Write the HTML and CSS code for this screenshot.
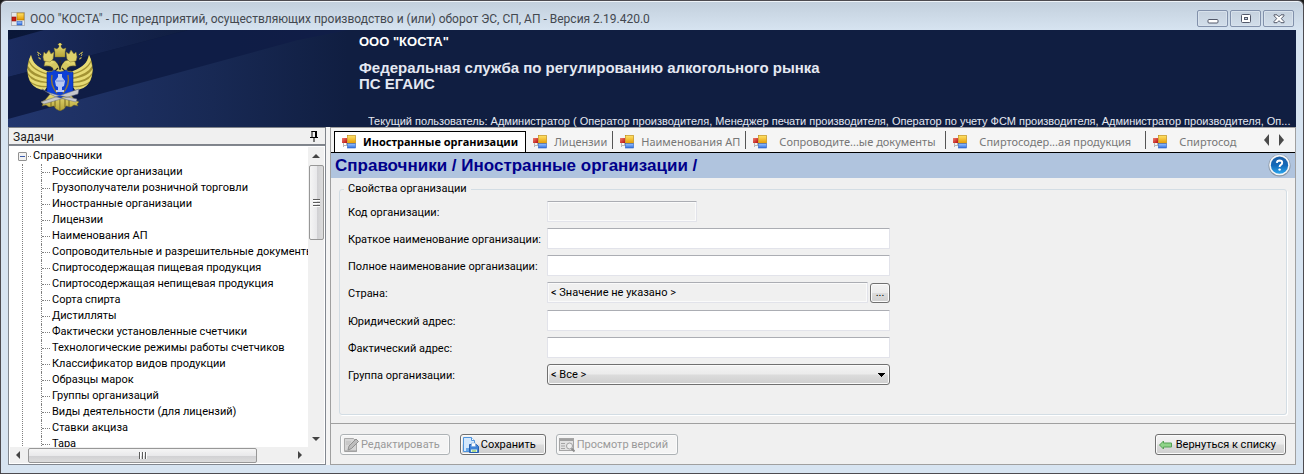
FILE: index.html
```html
<!DOCTYPE html>
<html lang="ru">
<head>
<meta charset="utf-8">
<title>ООО "КОСТА" - ПС предприятий</title>
<link rel="stylesheet" href="styles.css">
</head>
<body>
<svg class="defs" aria-hidden="true">
  <defs>
    <linearGradient id="gy" x1="0" y1="0" x2="0" y2="1"><stop offset="0" stop-color="#ffe36a"/><stop offset="1" stop-color="#e59a00"/></linearGradient>
    <linearGradient id="gb" x1="0" y1="0" x2="0" y2="1"><stop offset="0" stop-color="#9cc4ff"/><stop offset="1" stop-color="#2f6fe0"/></linearGradient>
    <linearGradient id="gr" x1="0" y1="0" x2="1" y2="1"><stop offset="0" stop-color="#f08070"/><stop offset="1" stop-color="#b80d0d"/></linearGradient>
    <symbol id="form" viewBox="0 0 14 14">
      <path d="M1.500 8v4M4.500 8v3M1 10.500h5" stroke="#b8b8b8" fill="none"/>
      <rect x="0" y="3" width="5" height="5" fill="url(#gr)"/>
      <rect x="5.500" y=".5" width="8" height="8" fill="url(#gy)" stroke="#b98200" stroke-width=".6"/>
      <rect x="5.500" y="8.500" width="8" height="4.500" fill="url(#gb)" stroke="#2e5fc0" stroke-width=".6"/>
    </symbol>
  </defs>
</svg>
<div class="window">
  <header class="titlebar">
    <svg class="app-icon" viewBox="0 0 14 14"><rect x=".5" y=".5" width="13" height="13" fill="#e6e8ea" stroke="#b0b4b8"/><rect x="1" y="5" width="4" height="4" fill="#c81e14" stroke="#8e0d0d" stroke-width=".6"/><rect x="6" y="1" width="7" height="7" fill="url(#gy)" stroke="#a87400" stroke-width=".6"/><rect x="6" y="9.500" width="5" height="3.500" fill="url(#gb)" stroke="#2e5fc0" stroke-width=".6"/></svg>
    <h1 class="window-title">ООО "КОСТА" - ПС предприятий, осуществляющих производство и (или) оборот ЭС, СП, АП - Версия 2.19.420.0</h1>
    <div class="window-buttons">
      <button class="win-btn" aria-label="Свернуть"><svg viewBox="0 0 12 10"><rect x="1" y="5.500" width="10" height="3.500" rx="1" fill="#fff" stroke="#53596a"/></svg></button>
      <button class="win-btn" aria-label="Развернуть"><svg viewBox="0 0 12 10"><rect x="1.500" y=".5" width="9" height="8" rx="1" fill="#fff" stroke="#53596a"/><rect x="4.500" y="3.500" width="3" height="2" fill="#c5d1de" stroke="#53596a"/></svg></button>
      <button class="win-btn" aria-label="Закрыть"><svg viewBox="0 0 12 10"><path d="M1 .8h3l2 2 2-2h3v1L8.200 4.500 11 7.500v1.200H8l-2-2-2 2H1V7.500l2.800-3L1 1.800z" fill="#fff" stroke="#53596a"/></svg></button>
    </div>
  </header>

  <section class="banner">
    <svg class="rays" viewBox="0 0 340 97" preserveAspectRatio="none">
      <defs>
        <linearGradient id="r1" x1="0" x2="1"><stop offset="0" stop-color="#0a1738"/><stop offset="1" stop-color="#101e41"/></linearGradient>
        <linearGradient id="r2" x1="0" x2="1"><stop offset="0" stop-color="#1b2c60"/><stop offset=".5" stop-color="#15244f"/><stop offset="1" stop-color="#101e41"/></linearGradient>
        <linearGradient id="r3" x1="0" x2="1"><stop offset="0" stop-color="#22366e"/><stop offset=".6" stop-color="#182954"/><stop offset="1" stop-color="#101e41"/></linearGradient>
      </defs>
      <rect width="340" height="97" fill="url(#r1)"/>
      <path d="M0 10 36 0H180L0 47z" fill="url(#r2)"/>
      <path d="M0 47 180 0H340V4L0 90z" fill="#101e48" opacity=".8"/>
      <path d="M0 89 290 10 340 0V97H0z" fill="url(#r3)"/>
    </svg>
    <svg class="emblem" viewBox="0 0 66 68" role="img" aria-label="Герб">
      <defs><linearGradient id="gold" x1="0" y1="0" x2="0" y2="1"><stop offset="0" stop-color="#eadf78"/><stop offset="1" stop-color="#b5a338"/></linearGradient>
      <g id="half">
        <path d="M4 12C-1 20-1 35 5 41c4 4 10 5 16 3l2-16c-7 1-13-3-16-8z" fill="#a39333"/>
        <path d="M4 12q1 10 16 16l3 3Q6 27 2 17zM2 19q3 9 20 13v3Q5 31 1 23zM0 25q4 9 21 11v3Q5 37 1 30zM1 32q5 8 19 8v3Q8 43 3 38zM4 40q6 5 16 4l-2 3q-9 0-14-7z" fill="#e6da74"/>
        <path d="M31 36q-7-1-9-8 5 1 4-3-3-3-9-2l1-4q2-3 6-2l4 1q5 5 3 10z" fill="url(#gold)" stroke="#796b22" stroke-width=".5"/>
        <path d="M17 18l-1-4 1-5 2 2 3-4 2 4 3-2-1 7-3 3z" fill="#ddd06a" stroke="#82742a" stroke-width=".5"/>
        <path d="M10 9q3 1 4 3M12 13q-2-1 0-3M14 16q-3 0-2-2" stroke="#c4b654" fill="none"/>
        <path d="M24 50 18 57l-4 2 2 2-1 2 4-1 3 2 5-1 2 3 4 2V50z" fill="url(#gold)" stroke="#6d6020" stroke-width=".5"/>
        <path d="M24 57v6M28 56v8" stroke="#74671f"/>
      </g></defs>
      <use href="#half"/><use href="#half" transform="translate(66 0) scale(-1 1)"/>
      <path d="M28 14V9l-1-4 3 1 2-2V2h-1V1h1V0h2v1h1v1h-1v2l2 2 3-1-1 4v5z" fill="url(#gold)" stroke="#82742a" stroke-width=".4"/>
      <path d="M29 29l-5-7 4-3 3 3 2 5 2-5 3-3 4 3-5 7z" fill="#d5c862"/>
      <path d="M33 17v10M31 25l-3 3M35 25l3 3" stroke="#2d2a20" stroke-width="1.200"/>
      <path d="M20 29q5 1 7-2 6 4 12 0 2 3 7 2v20q-5 2-8 4l-5 2-5-2q-3-2-8-4z" fill="#0d3fd6" stroke="#082a92" stroke-width=".6"/>
      <path d="M25 32q-2 10 5 18M41 32q2 10-5 18" fill="none" stroke="#8d7439" stroke-width="1.500"/>
      <path d="M31 31h4v3l3 4-1 5-2 1v3h2v2h-8v-2h2v-3l-2-1-1-5 3-4z" fill="#b9c9f2"/>
      <path d="M29 38h8" stroke="#6f8be0"/>
      <path d="M14 59 46 48l6-2-1 5-34 10zM15 46l8 5 6 3 20 5 1-3-20-4-10-3z" fill="#c7c8ca" stroke="#666b76" stroke-width=".5"/>
    </svg>
    <div class="banner-text">
      <p class="company">ООО "КОСТА"</p>
      <p class="agency">Федеральная служба по регулированию алкогольного рынка<br>ПС ЕГАИС</p>
      <p class="user">Текущий пользователь: Администратор ( Оператор производителя, Менеджер печати производителя, Оператор по учету ФСМ производителя, Администратор производителя, Оп...</p>
    </div>
  </section>

  <div class="workspace">
    <aside class="tasks">
      <div class="tasks-head"><h2>Задачи</h2>
        <button class="pin" aria-label="Закрепить"><svg viewBox="0 0 8 11"><path d="M1.500 .5h5M2 0v6M5.500 0v6M6.500 0v6M0 6.500h8M4 7v4" stroke="#000" fill="none"/></svg></button>
      </div>
      <div class="tree-box">
        <nav class="tree" aria-label="Задачи">
          <div class="root"><button class="toggle" aria-label="Свернуть"></button><span class="stub"></span><a href="#">Справочники</a></div>
          <ul>
            <li><a href="#">Российские организации</a></li>
            <li><a href="#">Грузополучатели розничной торговли</a></li>
            <li><a href="#">Иностранные организации</a></li>
            <li><a href="#">Лицензии</a></li>
            <li><a href="#">Наименования АП</a></li>
            <li><a href="#">Сопроводительные и разрешительные документы</a></li>
            <li><a href="#">Спиртосодержащая пищевая продукция</a></li>
            <li><a href="#">Спиртосодержащая непищевая продукция</a></li>
            <li><a href="#">Сорта спирта</a></li>
            <li><a href="#">Дистилляты</a></li>
            <li><a href="#">Фактически установленные счетчики</a></li>
            <li><a href="#">Технологические режимы работы счетчиков</a></li>
            <li><a href="#">Классификатор видов продукции</a></li>
            <li><a href="#">Образцы марок</a></li>
            <li><a href="#">Группы организаций</a></li>
            <li><a href="#">Виды деятельности (для лицензий)</a></li>
            <li><a href="#">Ставки акциза</a></li>
            <li><a href="#">Тара</a></li>
          </ul>
        </nav>
        <div class="vbar"><span class="arrow up"></span><span class="thumb"><i></i></span><span class="arrow down"></span></div>
        <div class="hbar"><span class="arrow left"></span><span class="thumb"><i></i></span><span class="arrow right"></span></div>
      </div>
    </aside>

    <main class="content">
      <div class="tabs">
        <div class="tab-strip" role="tablist">
          <button class="tab active" role="tab" aria-selected="true"><svg><use href="#form"/></svg>Иностранные организации</button>
          <button class="tab" role="tab"><svg><use href="#form"/></svg>Лицензии</button>
          <button class="tab" role="tab"><svg><use href="#form"/></svg>Наименования АП</button>
          <button class="tab wide" role="tab"><svg><use href="#form"/></svg>Сопроводите...ые документы</button>
          <button class="tab wide" role="tab"><svg><use href="#form"/></svg>Спиртосодер...ая продукция</button>
          <button class="tab wide" role="tab"><svg><use href="#form"/></svg>Спиртосодер...ая продукция</button>
        </div>
        <div class="tab-nav"><button class="arrow prev" aria-label="Назад"></button><button class="arrow next" aria-label="Вперёд"></button></div>
      </div>
      <div class="crumbs">
        <h2>Справочники / Иностранные организации /</h2>
        <button class="help" aria-label="Справка"><svg viewBox="0 0 24 24"><defs><linearGradient id="hb" x1="0" y1="0" x2="0" y2="1"><stop offset="0" stop-color="#1c5fa6"/><stop offset=".5" stop-color="#1268b8"/><stop offset="1" stop-color="#2ba6ee"/></linearGradient></defs><circle cx="12" cy="12" r="11.500" fill="#8a96a4"/><circle cx="12" cy="11.500" r="10.800" fill="#f4f6f8"/><circle cx="12" cy="11.700" r="9" fill="url(#hb)"/><path d="M9.200 9.300q.2-2.600 2.900-2.600 2.700.1 2.700 2.300 0 1.300-1.500 2.300-1.200.8-1.200 2.300" fill="none" stroke="#fff" stroke-width="2"/><circle cx="12.100" cy="16.300" r="1.300" fill="#fff"/></svg></button>
      </div>
      <form class="form">
        <fieldset>
          <legend>Свойства организации</legend>
          <div class="fields">
            <label for="code">Код организации:</label><input id="code" class="short" type="text" disabled>
            <label for="short">Краткое наименование организации:</label><input id="short" type="text">
            <label for="full">Полное наименование организации:</label><input id="full" type="text">
            <label for="country">Страна:</label><div class="picker"><input id="country" type="text" value="&lt; Значение не указано &gt;" readonly><button type="button" class="more">...</button></div>
            <label for="legal">Юридический адрес:</label><input id="legal" type="text">
            <label for="actual">Фактический адрес:</label><input id="actual" type="text">
            <label for="group">Группа организации:</label><select id="group"><option>&lt; Все &gt;</option></select>
          </div>
        </fieldset>
      </form>
      <footer class="actions">
        <button class="btn" disabled><svg viewBox="0 0 16 16"><path d="M1.500 1.500h9l3 3v10h-12z" fill="#d5d5d5" stroke="#a9a9a9"/><path d="M3 5h5M3 7h4" stroke="#bbb"/><path d="M5 13l1-4 7-7 2.500 2.500-7 7z" fill="#bdbdbd" stroke="#8f8f8f"/><path d="M2 14h12" stroke="#999"/></svg>Редактировать</button>
        <button class="btn"><svg viewBox="0 0 16 16"><path d="M.5 .5h8l3 3v11H.5z" fill="#d4e8fc" stroke="#4f94dc"/><path d="M8.500 .5v3h3" fill="#fff" stroke="#4f94dc"/><path d="M3 11h3v3H3z" fill="#68a8ea"/><path d="M6.500 7.500h7l2 2v6h-9z" fill="#3f83d8" stroke="#265fae"/><path d="M8.500 6h4v3.500h-4z" fill="#fff" stroke="#79a7dc" stroke-width=".6"/><path d="M8 12.500h6V15H8z" fill="#e2f3dc"/><path d="M9 14h4" stroke="#7bbf45"/></svg>Сохранить</button>
        <button class="btn" disabled><svg viewBox="0 0 16 16"><rect x=".5" y="1.500" width="14" height="12" fill="#e2e2e2" stroke="#a5a5a5"/><path d="M1 3h13" stroke="#a0a0a0" stroke-width="2"/><path d="M2 6.500h4M2 9h4M2 11.500h4" stroke="#a5a5a5"/><circle cx="10.500" cy="9" r="3" fill="#eee" stroke="#a0a0a0"/><path d="M12.500 11.500l3 3" stroke="#8e8e8e" stroke-width="2"/></svg>Просмотр версий</button>
        <button class="btn back"><svg viewBox="0 0 16 16"><path d="M1.500 8l4-4v2h8v4h-8v2z" fill="#8fd489" stroke="#55a055"/></svg>Вернуться к списку</button>
      </footer>
    </main>
  </div>
</div>
</body>
</html>
```
FILE: styles.css
```css
* { box-sizing: border-box; }

body {
  margin: 0;
  background: #1b1b1b;
  color: #000;
  font: 11px/16px Roboto, "Liberation Sans", sans-serif;
}

h1, h2, p, ul { margin: 0; padding: 0; font-size: inherit; font-weight: inherit; }
button, input, select { font: inherit; color: inherit; }
button { padding: 0; border: 0; background: none; }
a { color: inherit; text-decoration: none; }
svg { display: block; flex: none; }
.defs { position: absolute; width: 0; height: 0; }

.window {
  display: flex;
  flex-direction: column;
  height: 100vh;
  padding: 0 7px 8px;
  border: 1px solid #4d4b50;
  border-radius: 6px 6px 0 0;
  background: linear-gradient(#c2cfdc, #d7e4f1 30px);
  box-shadow: inset 0 1px 0 #eef3f8;
}

/* Title bar */
.titlebar { display: flex; flex: none; align-items: center; height: 29px; padding: 6px 2px 0 3px; }
.app-icon { width: 14px; height: 14px; }
.window-title { flex: 1; margin-left: 5px; color: #43484f; font-size: 12px; white-space: nowrap; overflow: hidden; }
.window-buttons { display: flex; gap: 2px; }
.win-btn {
  display: grid;
  place-items: center;
  width: 31px;
  height: 17px;
  border: 1px solid #8291ab;
  border-radius: 2px;
  background: linear-gradient(#c5d1de, #d2deea);
  box-shadow: inset 0 0 0 1px #d8e2ec;
}
.win-btn svg { width: 12px; height: 10px; }

/* Banner */
.banner { position: relative; display: flex; flex: none; height: 97px; background: #101e41; }
.rays { position: absolute; left: 0; top: 0; width: 340px; height: 100%; }
.emblem { position: relative; width: 66px; height: 68px; margin: 13px 0 0 19px; }
.banner-text {
  position: relative;
  flex: 1;
  min-width: 0;
  margin-left: 266px;
  padding: 4px 4px 0 0;
  color: #e4e8f2;
  font-family: "Liberation Sans", sans-serif;
}
.company { color: #fff; font-size: 13px; font-weight: bold; }
.agency { margin-top: 10px; font-size: 15px; font-weight: bold; }
.user { margin: 21px 0 0 9px; overflow: hidden; text-overflow: ellipsis; white-space: nowrap; }

/* Panels */
.workspace { display: flex; flex: 1; gap: 4px; min-height: 0; background: #f4f4f4; }

.tasks { display: flex; flex-direction: column; width: 318px; }
.tasks-head {
  display: flex;
  flex: none;
  align-items: center;
  justify-content: space-between;
  height: 18px;
  padding: 1px 7px 0 4px;
  border: 1px solid #7f838a;
  background: #f0f0f0;
  color: #222;
  font-size: 12px;
}
.pin svg { width: 8px; height: 11px; }

.tree-box {
  display: grid;
  flex: 1;
  grid-template: minmax(0, 1fr) 16px / minmax(0, 1fr) 16px;
  min-height: 0;
  padding: 1px;
  border: 1px solid #82878f;
  background: #fff;
}
.tree { overflow: hidden; padding: 1px 0 0 8px; white-space: nowrap; }
.root { display: flex; align-items: center; }
.toggle {
  width: 9px;
  height: 9px;
  border: 1px solid #919191;
  border-radius: 1px;
  background: linear-gradient(#3b5bab, #3b5bab) center / 5px 1px no-repeat, #f2f2f2;
}
.stub { width: 3px; margin: 0 2px 0 1px; border-top: 1px dotted #808080; }
.tree ul { margin-left: 4px; border-left: 1px dotted #808080; padding-left: 18px; list-style: none; }
.tree li { display: flex; align-items: center; border-left: 1px dotted #808080; }
.tree li::before { content: ""; flex: none; width: 8px; margin-right: 2px; border-top: 1px dotted #808080; }

.vbar, .hbar { display: flex; align-items: center; background: #f0f0f0; }
.vbar { flex-direction: column; }
.hbar { grid-column: 1; }
.tree-box::after { content: ""; background: #f0f0f0; }
.vbar .thumb, .hbar .thumb { display: grid; place-items: center; border: 1px solid #979797; border-radius: 2px; }
.vbar .thumb { width: 15px; height: 25%; background: linear-gradient(90deg, #f5f5f5, #e9e9eb 50%, #d0d0d3 52%, #dcdcdc); }
.hbar .thumb { width: 77%; height: 15px; background: linear-gradient(#f5f5f5, #e9e9eb 50%, #d0d0d3 52%, #dcdcdc); }
.vbar i { width: 7px; height: 8px; background: repeating-linear-gradient(#5c5c5c 0 1px, #fff 1px 2px, transparent 2px 3px); }
.hbar i { width: 8px; height: 7px; background: repeating-linear-gradient(90deg, #5c5c5c 0 1px, #fff 1px 2px, transparent 2px 3px); }

.arrow { flex: none; width: 0; height: 0; border: 0 solid transparent; }
.up { margin: 7px 0; border-width: 0 4px 4px; border-bottom-color: #444; }
.down { margin: auto 0 6px; border-width: 4px 4px 0; border-top-color: #444; }
.left { margin: 0 8px 0 6px; border-width: 4px 4px 4px 0; border-right-color: #444; }
.right { margin: 0 6px 0 auto; border-width: 4px 0 4px 4px; border-left-color: #444; }

/* Content */
.content {
  display: flex;
  flex: 1;
  flex-direction: column;
  min-width: 0;
  border: 1px solid #a0a0a0;
  background: #f0f0f0;
}
.tabs { display: flex; flex: none; height: 25px; padding: 3px 11px 0 3px; border-bottom: 1px solid #000; background: #f5f5f5; }
.tab-strip { display: flex; flex: 0 1 903px; min-width: 0; overflow: hidden; }
.tab {
  position: relative;
  display: flex;
  flex: none;
  align-items: center;
  gap: 7px;
  height: 21px;
  padding: 0 6px 0 7px;
  color: #777;
  font: 11px/16px "Noto Sans", sans-serif;
}
.tab::after { content: ""; position: absolute; right: 0; top: 0; height: 18px; border-right: 1px solid #555; }
.tab svg { width: 14px; height: 14px; }
.tab.active { padding-right: 7px; border: 1px solid #000; border-bottom: 0; background: #fff; color: #000; font-weight: bold; }
.tab.active::after { display: none; }
.tab.wide { gap: 12px; width: 200px; }
.tab-nav { display: flex; align-items: center; gap: 10px; margin-left: auto; padding-bottom: 4px; }
.prev { border-width: 6px 5px 6px 0; border-right-color: #4a4a4a; }
.next { border-width: 6px 0 6px 5px; border-left-color: #4a4a4a; }

.crumbs { display: flex; flex: none; align-items: center; justify-content: space-between; height: 25px; padding: 0 4px; background: #b0c4de; }
.crumbs h2 { color: #00008b; font: bold 17px/24px "Liberation Sans", sans-serif; white-space: nowrap; }
.help svg { width: 23px; height: 23px; }

.form { display: flex; flex: 1; min-height: 0; padding: 3px 8px 8px; }
fieldset { flex: 1; min-width: 0; margin: 0; padding: 0 8px; border: 1px solid #d3dde4; border-radius: 3px; box-shadow: 1px 1px 0 #fff; }
legend { margin-left: -4px; padding: 0 4px; }
.fields {
  display: grid;
  grid-template-columns: 193px minmax(0, 343px);
  grid-auto-rows: minmax(21px, auto);
  gap: 6px;
  align-items: center;
  margin-top: 4px;
}
.fields label { padding-top: 2px; white-space: nowrap; }
input {
  width: 100%;
  height: 21px;
  padding: 0 3px;
  border: 1px solid #e2e3ea;
  border-top-color: #abadb3;
  border-radius: 1px;
  background: #fff;
}
.short { width: 150px; }
input:disabled, input:read-only { background: #f0f0f0; box-shadow: inset 0 0 0 1px #fafafa; }
.picker { display: flex; gap: 2px; height: 22px; align-items: flex-start; }
.picker input { flex: 1; min-width: 0; }
.more, select, .btn {
  border: 1px solid #707070;
  border-radius: 3px;
  background: linear-gradient(#f3f3f3, #ebebeb 49%, #dcdcdc 51%, #cfcfcf);
  box-shadow: inset 0 0 0 1px #fbfbfb;
}
.more { flex: none; width: 20px; height: 20px; margin-top: 1px; }
select {
  width: 100%;
  height: 21px;
  padding: 0 3px;
  appearance: none;
  background:
    linear-gradient(#000, #000) right 4px top 8px / 7px 1px no-repeat,
    linear-gradient(#000, #000) right 5px top 9px / 5px 1px no-repeat,
    linear-gradient(#000, #000) right 6px top 10px / 3px 1px no-repeat,
    linear-gradient(#000, #000) right 7px top 11px / 1px 1px no-repeat,
    linear-gradient(#f3f3f3, #ebebeb 49%, #dcdcdc 51%, #cfcfcf);
}

.actions { display: flex; flex: none; gap: 10px; padding: 10px 9px 9px; border-top: 1px solid #a0a0a0; }
.btn { display: flex; align-items: center; gap: 2px; height: 21px; padding: 0 9px 0 2px; }
.btn svg { width: 16px; height: 16px; }
.btn:disabled { border-color: #adb2b5; background: #f4f4f4; color: #9a9a9a; }
.back { margin-left: auto; }
```
